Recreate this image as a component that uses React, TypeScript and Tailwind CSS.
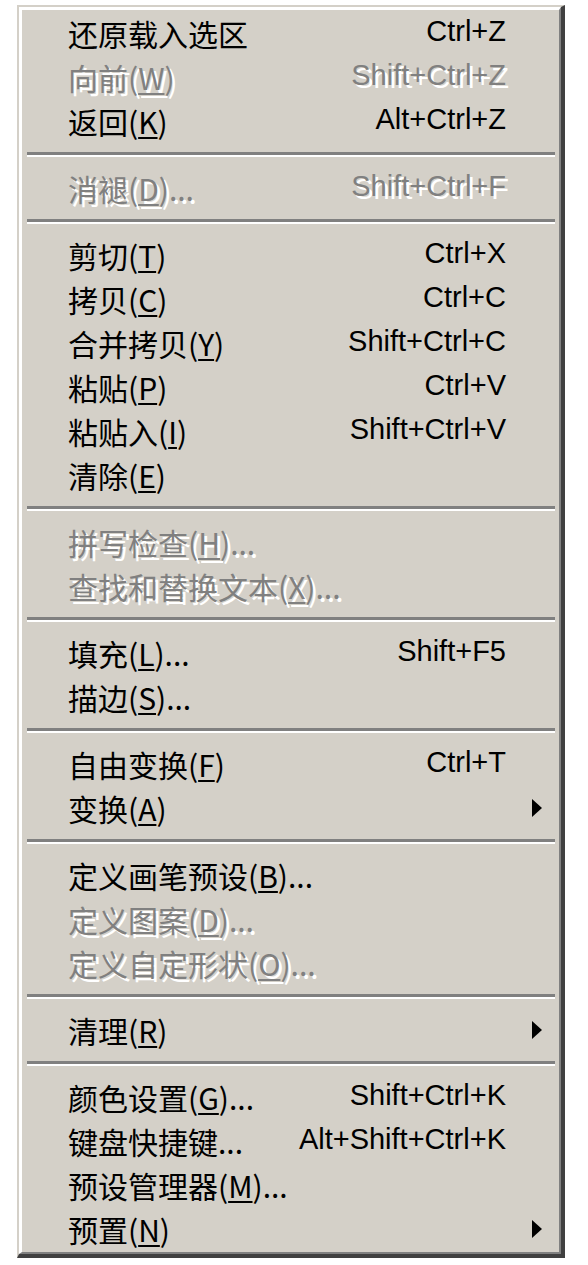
import React from 'react';

type Item =
  | { sep: true }
  | {
      sep?: false;
      label: string;
      mnemonic?: string;
      tail?: string;
      shortcut?: string;
      disabled?: boolean;
      submenu?: boolean;
    };

const ITEMS: Item[] = [
  { label: '还原载入选区', shortcut: 'Ctrl+Z' },
  { label: '向前', mnemonic: 'W', shortcut: 'Shift+Ctrl+Z', disabled: true },
  { label: '返回', mnemonic: 'K', shortcut: 'Alt+Ctrl+Z' },
  { sep: true },
  { label: '消褪', mnemonic: 'D', tail: '...', shortcut: 'Shift+Ctrl+F', disabled: true },
  { sep: true },
  { label: '剪切', mnemonic: 'T', shortcut: 'Ctrl+X' },
  { label: '拷贝', mnemonic: 'C', shortcut: 'Ctrl+C' },
  { label: '合并拷贝', mnemonic: 'Y', shortcut: 'Shift+Ctrl+C' },
  { label: '粘贴', mnemonic: 'P', shortcut: 'Ctrl+V' },
  { label: '粘贴入', mnemonic: 'I', shortcut: 'Shift+Ctrl+V' },
  { label: '清除', mnemonic: 'E' },
  { sep: true },
  { label: '拼写检查', mnemonic: 'H', tail: '...', disabled: true },
  { label: '查找和替换文本', mnemonic: 'X', tail: '...', disabled: true },
  { sep: true },
  { label: '填充', mnemonic: 'L', tail: '...', shortcut: 'Shift+F5' },
  { label: '描边', mnemonic: 'S', tail: '...' },
  { sep: true },
  { label: '自由变换', mnemonic: 'F', shortcut: 'Ctrl+T' },
  { label: '变换', mnemonic: 'A', submenu: true },
  { sep: true },
  { label: '定义画笔预设', mnemonic: 'B', tail: '...' },
  { label: '定义图案', mnemonic: 'D', tail: '...', disabled: true },
  { label: '定义自定形状', mnemonic: 'O', tail: '...', disabled: true },
  { sep: true },
  { label: '清理', mnemonic: 'R', submenu: true },
  { sep: true },
  { label: '颜色设置', mnemonic: 'G', tail: '...', shortcut: 'Shift+Ctrl+K' },
  { label: '键盘快捷键...', shortcut: 'Alt+Shift+Ctrl+K' },
  { label: '预设管理器', mnemonic: 'M', tail: '...' },
  { label: '预置', mnemonic: 'N', submenu: true },
];

const CJK = "font-['Noto_Sans_CJK_SC','Noto_Sans',sans-serif]";
const LATIN = "font-['Liberation_Sans',Arial,sans-serif]";

export default function App() {
  return (
    <div className="min-h-[1265px] bg-white pt-[5px] pl-[17px]">
      {/* classic 3d menu frame */}
      <div className="w-[548px] border-t-[2px] border-l-[2px] border-r-[4px] border-b-[4px] border-t-[#d4d0c8] border-l-[#d4d0c8] border-r-[#404040] border-b-[#404040]">
        <div className="border-t-[3px] border-l-[3px] border-r-[2px] border-b-[2px] border-t-white border-l-white border-r-[#808080] border-b-[#808080] bg-[#d4d0c8] pt-[1px] pb-[1px]">
          {ITEMS.map((item, i) => {
            if (item.sep) {
              return (
                <div key={i} className="flex h-[23px] items-center pl-[5px] pr-[4px]">
                  <div className="h-[5px] w-full border-t-[3px] border-b-[2px] border-t-[#808080] border-b-white" />
                </div>
              );
            }
            const dim = item.disabled
              ? 'text-[#808080] [text-shadow:3px_3px_0_#ffffff]'
              : 'text-black';
            return (
              <div key={i} className={`flex h-[44px] items-center pl-[46px] ${dim}`}>
                <span className={`flex-1 text-[30px] leading-none whitespace-nowrap ${CJK}`}>
                  {item.label}
                  {item.mnemonic && (
                    <>
                      (
                      <span className="underline decoration-[2px] underline-offset-[3px]">
                        {item.mnemonic}
                      </span>
                      )
                    </>
                  )}
                  {item.tail}
                </span>
                {item.shortcut && (
                  <span className={`-mt-[3px] pr-[53px] text-[29px] leading-none whitespace-nowrap ${LATIN}`}>
                    {item.shortcut}
                  </span>
                )}
                {item.submenu && (
                  <svg width="10" height="18" viewBox="0 0 10 18" className="mr-[17px]">
                    <polygon points="0,0 10,9 0,18" fill="#000000" />
                  </svg>
                )}
              </div>
            );
          })}
        </div>
      </div>
    </div>
  );
}
